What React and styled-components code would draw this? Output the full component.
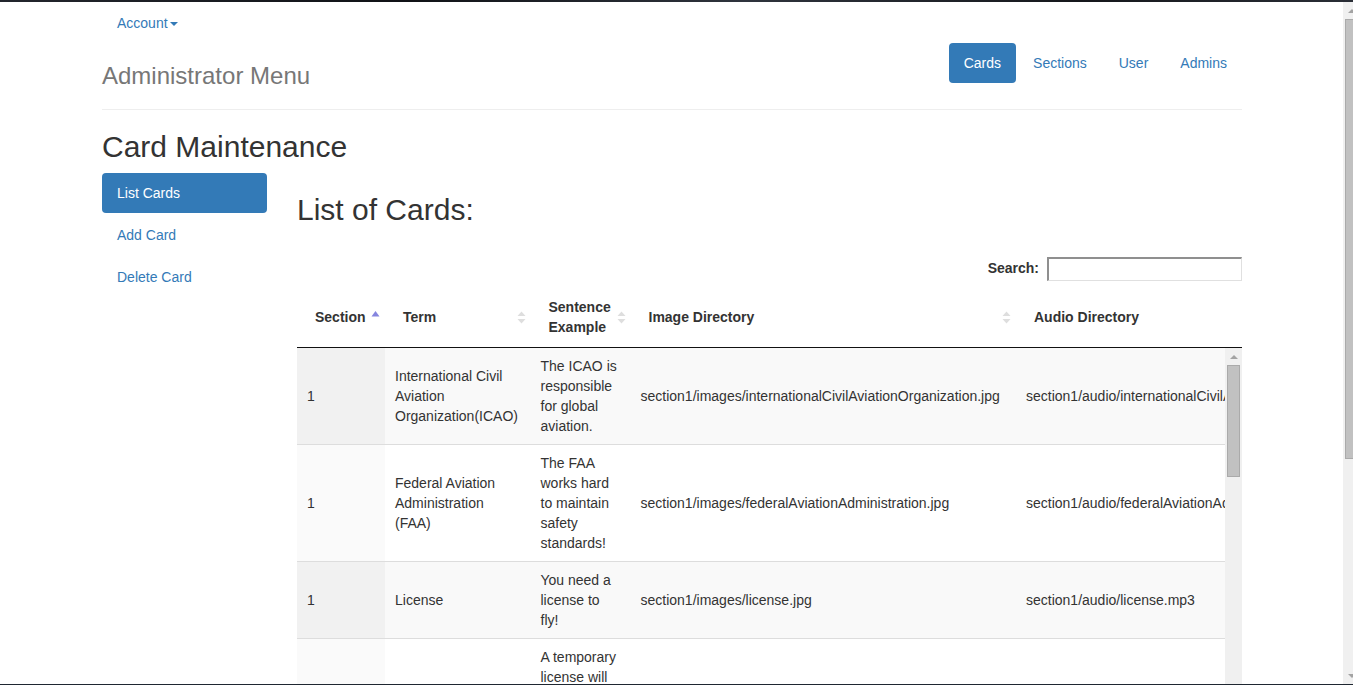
import React from 'react';
import styled, { createGlobalStyle } from 'styled-components';

const GlobalStyle = createGlobalStyle`
  html, body {
    margin: 0;
    padding: 0;
    overflow: hidden;
    background: #fff;
  }
  body {
    font-family: "Liberation Sans", Arial, Helvetica, sans-serif;
    font-size: 14px;
    line-height: 1.42857;
    color: #333;
  }
  * { box-sizing: border-box; }
`;

const Frame = styled.div`
  width: 1353px;
  height: 685px;
  display: flex;
  flex-direction: column;
  overflow: hidden;
`;

const TopStrip = styled.div`
  height: 2px;
  flex: none;
  background: linear-gradient(90deg, #23262d 0%, #101216 30%, #2f343d 55%, #15171b 80%, #2a2e36 100%);
`;

const BottomLine = styled.div`
  height: 1px;
  flex: none;
  background: #1f2731;
`;

const Viewport = styled.div`
  flex: 1;
  min-height: 0;
  display: flex;
`;

const Page = styled.div`
  flex: 1;
  overflow: hidden;
`;

const Container = styled.div`
  width: 1140px;
  margin-left: 102px;
`;

const AccountBar = styled.div`
  padding-top: 1px;
  height: 41px;
`;

const Link = styled.a`
  display: inline-block;
  padding: 10px 15px;
  line-height: 20px;
  color: #337ab7;
  text-decoration: none;
  cursor: pointer;
`;

const Caret = styled.span`
  display: inline-block;
  width: 0;
  height: 0;
  margin-left: 2px;
  vertical-align: middle;
  border-top: 4px solid #337ab7;
  border-left: 4px solid transparent;
  border-right: 4px solid transparent;
`;

const Header = styled.div`
  height: 67px;
  display: flex;
  justify-content: space-between;
  align-items: flex-start;
  border-bottom: 1px solid #eee;
`;

const AdminTitle = styled.h3`
  margin: 20px 0 0;
  font-size: 24px;
  line-height: 26.4px;
  font-weight: normal;
  color: #777;
`;

const Pills = styled.ul`
  list-style: none;
  margin: 0;
  padding: 0;
  display: flex;
  flex-direction: ${({ $stacked }) => ($stacked ? 'column' : 'row')};
  gap: 2px;
`;

const Pill = styled.li`
  display: block;
  border-radius: 4px;
  background: ${({ $active }) => ($active ? '#337ab7' : 'transparent')};

  a {
    display: block;
    color: ${({ $active }) => ($active ? '#fff' : '#337ab7')};
  }
`;

const PageTitle = styled.h2`
  margin: 20px 0 10px;
  font-size: 30px;
  line-height: 33px;
  font-weight: normal;
  color: #333;
`;

const Row = styled.div`
  display: flex;
  gap: 30px;
`;

const SideCol = styled.div`
  width: 165px;
  flex: none;
`;

const MainCol = styled.div`
  width: 945px;
  flex: none;
`;

const FilterRow = styled.div`
  margin-top: 31px;
  height: 24px;
  display: flex;
  justify-content: flex-end;
  align-items: center;
  gap: 8px;
`;

const FilterLabel = styled.label`
  font-weight: bold;
`;

const SearchInput = styled.input`
  width: 195px;
  height: 24px;
  border: 1px solid #e0e0e0;
  border-top: 2px solid #8f8f8f;
  border-left: 2px solid #8f8f8f;
  outline: none;
  padding: 1px 4px;
  font: inherit;
`;

const ScrollHead = styled.div`
  margin-top: 6px;
  overflow: hidden;
  border-bottom: 1px solid #111;
`;

const DataTable = styled.table`
  table-layout: fixed;
  border-collapse: collapse;
  width: 1119px;
`;

const Col = styled.col`
  width: ${({ $w }) => $w}px;
`;

const Th = styled.th`
  position: relative;
  padding: 10px 18px;
  text-align: left;
  vertical-align: middle;
  font-weight: bold;
  line-height: 20px;
  color: #333;
`;

const SortSvg = styled.svg`
  position: absolute;
  right: 0;
  top: 50%;
  margin-top: -9.5px;
  width: 19px;
  height: 19px;
`;

const ScrollBody = styled.div`
  display: flex;
  height: 420px;
`;

const BodyClip = styled.div`
  flex: 1;
  overflow: hidden;
`;

const Tr = styled.tr`
  background: ${({ $odd }) => ($odd ? '#f9f9f9' : '#fff')};
`;

const Td = styled.td`
  padding: 8px 10px;
  line-height: 20px;
  vertical-align: middle;
  border-bottom: 1px solid #ddd;
  white-space: ${({ $nowrap }) => ($nowrap ? 'nowrap' : 'normal')};
  overflow: hidden;
  background: ${({ $sorted, $odd }) => ($sorted ? ($odd ? '#f1f1f1' : '#fafafa') : 'transparent')};
`;

const Scrollbar = styled.div`
  width: ${({ $w }) => $w}px;
  flex: none;
  overflow: hidden;
  background: #f0f0f0;
`;

const ScrollTrack = styled.div`
  width: 17px;
  height: 100%;
  display: flex;
  flex-direction: column;
  align-items: center;
`;

const ArrowBtn = styled.div`
  height: 17px;
  width: 17px;
  flex: none;
  display: flex;
  align-items: center;
  justify-content: center;

  &::before {
    content: '';
    width: 0;
    height: 0;
    border-left: 4px solid transparent;
    border-right: 4px solid transparent;
    ${({ $down }) => ($down ? 'border-top: 4px solid #a3a3a3;' : 'border-bottom: 4px solid #a3a3a3;')}
  }
`;

const Thumb = styled.div`
  width: 13px;
  height: ${({ $h }) => $h}px;
  flex: none;
  background: #c1c1c1;
  border: 1px solid #aaa;
`;

const Spacer = styled.div`
  flex: 1;
`;

const columns = [
  { key: 'section', label: 'Section', w: 88, sort: 'asc' },
  { key: 'term', label: 'Term', w: 145.5, sort: 'both' },
  { key: 'sentence', label: 'Sentence Example', w: 100, sort: 'both' },
  { key: 'image', label: 'Image Directory', w: 385.5, sort: 'both' },
  { key: 'audio', label: 'Audio Directory', w: 400, sort: 'both' },
];

const cards = [
  {
    section: '1',
    term: 'International Civil Aviation Organization(ICAO)',
    sentence: 'The ICAO is responsible for global aviation.',
    image: 'section1/images/internationalCivilAviationOrganization.jpg',
    audio: 'section1/audio/internationalCivilAviationOrganization.mp3',
  },
  {
    section: '1',
    term: 'Federal Aviation Administration (FAA)',
    sentence: 'The FAA works hard to maintain safety standards!',
    image: 'section1/images/federalAviationAdministration.jpg',
    audio: 'section1/audio/federalAviationAdministration.mp3',
  },
  {
    section: '1',
    term: 'License',
    sentence: 'You need a license to fly!',
    image: 'section1/images/license.jpg',
    audio: 'section1/audio/license.mp3',
  },
  {
    section: '1',
    term: 'Temporary License',
    sentence: 'A temporary license will be given to you until the permanent one arrives.',
    image: 'section1/images/temporaryLicense.jpg',
    audio: 'section1/audio/temporaryLicense.mp3',
  },
];

const SortIcon = ({ dir }) => (
  <SortSvg viewBox="0 0 19 19">
    {dir === 'asc' ? (
      <polygon points="5.5,8.5 9.5,3 13.5,8.5" fill="#8585df" />
    ) : (
      <>
        <polygon points="5.5,8 9.5,3.5 13.5,8" fill="#dedede" />
        <polygon points="5.5,11 9.5,15.5 13.5,11" fill="#dedede" />
      </>
    )}
  </SortSvg>
);

const ColGroup = () => (
  <colgroup>
    {columns.map((c) => (
      <Col key={c.key} $w={c.w} />
    ))}
  </colgroup>
);

const CardTable = () => (
  <>
    <ScrollHead>
      <DataTable>
        <ColGroup />
        <thead>
          <tr>
            {columns.map((c) => (
              <Th key={c.key}>
                {c.label}
                <SortIcon dir={c.sort} />
              </Th>
            ))}
          </tr>
        </thead>
      </DataTable>
    </ScrollHead>
    <ScrollBody>
      <BodyClip>
        <DataTable>
          <ColGroup />
          <tbody>
            {cards.map((card, i) => {
              const odd = i % 2 === 0;
              return (
                <Tr key={i} $odd={odd}>
                  {columns.map((c, j) => (
                    <Td key={c.key} $sorted={j === 0} $odd={odd} $nowrap={j >= 3}>
                      {card[c.key]}
                    </Td>
                  ))}
                </Tr>
              );
            })}
          </tbody>
        </DataTable>
      </BodyClip>
      <Scrollbar $w={17}>
        <ScrollTrack>
          <ArrowBtn />
          <Thumb $h={112} />
          <Spacer />
        </ScrollTrack>
      </Scrollbar>
    </ScrollBody>
  </>
);

const App = () => {
  return (
    <Frame>
      <GlobalStyle />
      <TopStrip />
      <Viewport>
        <Page>
          <Container>
            <AccountBar>
              <Link>
                Account<Caret />
              </Link>
            </AccountBar>
            <Header>
              <AdminTitle>Administrator Menu</AdminTitle>
              <Pills>
                <Pill $active><Link>Cards</Link></Pill>
                <Pill><Link>Sections</Link></Pill>
                <Pill><Link>User</Link></Pill>
                <Pill><Link>Admins</Link></Pill>
              </Pills>
            </Header>
            <PageTitle>Card Maintenance</PageTitle>
            <Row>
              <SideCol>
                <Pills $stacked>
                  <Pill $active><Link>List Cards</Link></Pill>
                  <Pill><Link>Add Card</Link></Pill>
                  <Pill><Link>Delete Card</Link></Pill>
                </Pills>
              </SideCol>
              <MainCol>
                <PageTitle>List of Cards:</PageTitle>
                <FilterRow>
                  <FilterLabel htmlFor="card-search">Search:</FilterLabel>
                  <SearchInput id="card-search" type="search" />
                </FilterRow>
                <CardTable />
              </MainCol>
            </Row>
          </Container>
        </Page>
        <Scrollbar $w={10}>
          <ScrollTrack>
            <ArrowBtn />
            <Thumb $h={440} />
            <Spacer />
            <ArrowBtn $down />
          </ScrollTrack>
        </Scrollbar>
      </Viewport>
      <BottomLine />
    </Frame>
  );
};

export default App;
